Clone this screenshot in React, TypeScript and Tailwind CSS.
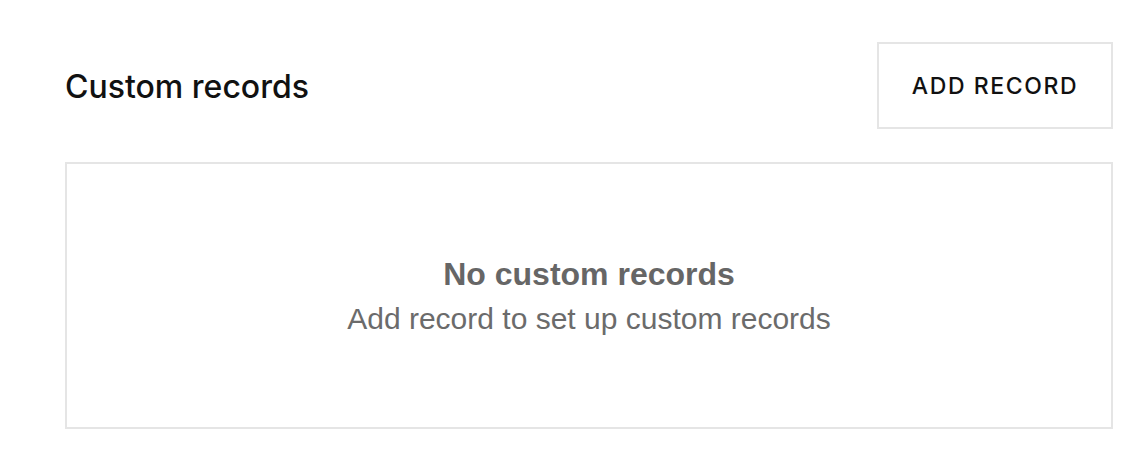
export default function App() {
  return (
    <main className="min-h-[468px] bg-white pl-[65px] pr-[11px] pt-[42px]" style={{ fontFamily: 'Inter, "Liberation Sans", sans-serif' }}>
      {/* Header */}
      <div className="flex items-center justify-between">
        <h1 className="pt-[2px] text-[32px] font-medium text-[#111] tracking-[0px]">Custom records</h1>
        <button className="h-[87px] w-[236px] border-2 border-[#e5e5e5] bg-white pt-[2px] text-[23px] font-medium tracking-[1.6px] text-[#111]">
          ADD RECORD
        </button>
      </div>

      {/* Empty state */}
      <section className="mt-[33px] flex h-[267px] flex-col items-center justify-center border-2 border-[#e5e5e5] pt-[2px]">
        <p className="text-[32px] font-bold leading-[36px] text-[#666]" style={{ fontFamily: '"Liberation Sans", Arial, sans-serif' }}>
          No custom records
        </p>
        <p className="mt-[9px] text-[30px] leading-[36px] text-[#6b6b6b]" style={{ fontFamily: '"Liberation Sans", Arial, sans-serif' }}>
          Add record to set up custom records
        </p>
      </section>
    </main>
  );
}
